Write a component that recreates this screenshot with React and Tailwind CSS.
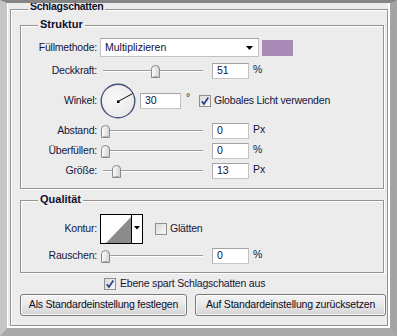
import React from "react";

const font = { fontFamily: '"Liberation Sans", Arial, sans-serif' };

const Thumb = ({ left }) => (
  <svg
    className="absolute top-[2px]"
    style={{ left }}
    width="9"
    height="13"
    viewBox="0 0 9 13"
  >
    <defs>
      <linearGradient id="tg" x1="0" y1="0" x2="1" y2="0">
        <stop offset="0" stopColor="#ffffff" />
        <stop offset="1" stopColor="#d2d2d2" />
      </linearGradient>
    </defs>
    <path
      d="M0.5 12.5 V4 Q0.5 0.5 4.5 0.5 Q8.5 0.5 8.5 4 V12.5 Z"
      fill="url(#tg)"
      stroke="#8a8a8a"
    />
    <path d="M2 11.5 H7" stroke="#b0b0b0" />
  </svg>
);

const Slider = ({ pos }) => (
  <div className="relative ml-[3px] h-[16px] w-[109px]">
    <div className="absolute left-[3px] top-[7px] h-px w-[100px] bg-[#9d9d9d]" />
    <div className="absolute left-[3px] top-[8px] h-px w-[100px] bg-white" />
    <Thumb left={pos} />
  </div>
);

const Field = ({ value, w = "w-[37px]", ml = "ml-[3px]" }) => (
  <div
    className={`${w} ${ml} flex h-[16px] items-center border border-[#c4c4c4] border-t-[#a2a2a2] border-l-[#b0b0b0] bg-white pl-[4px] text-[10.5px] text-[#10103a]`}
  >
    {value}
  </div>
);

const Label = ({ children }) => (
  <span className="w-[76px] shrink-0 text-right text-[10.5px] tracking-[-0.2px] text-[#16163a]">
    {children}
  </span>
);

const Unit = ({ children }) => (
  <span className="ml-[4px] self-start text-[10.5px] leading-[12px] text-[#16163a]">
    {children}
  </span>
);

const Check = ({ checked }) => (
  <svg width="12" height="12" viewBox="0 0 12 12" className="shrink-0">
    <defs>
      <linearGradient id="cg" x1="0" y1="0" x2="1" y2="1">
        <stop offset="0" stopColor="#d8d8d8" />
        <stop offset="1" stopColor="#fbfbfb" />
      </linearGradient>
    </defs>
    <rect x="0.5" y="0.5" width="11" height="11" fill="url(#cg)" stroke="#8e8f8f" />
    {checked && (
      <path
        d="M2.8 6.2 L4.9 9 L9.3 2.6"
        fill="none"
        stroke="#2c3f86"
        strokeWidth="1.7"
      />
    )}
  </svg>
);

const Group = ({ title, className, children }) => (
  <div
    className={`relative border border-[#929292] shadow-[1px_1px_0_#ffffff,inset_1px_1px_0_#ffffff] ${className}`}
  >
    <span className="absolute left-[17px] top-[-8px] bg-[#ececec] px-[2px] text-[11px] font-bold leading-[13px] text-[#0f0f2a]">
      {title}
    </span>
    {children}
  </div>
);

const SliderRow = ({ label, pos, value, unit, className = "" }) => (
  <div className={`flex h-[16px] items-center ${className}`}>
    <Label>{label}</Label>
    <Slider pos={pos} />
    <Field value={value} />
    <Unit>{unit}</Unit>
  </div>
);

const Dial = () => (
  <svg width="36" height="36" viewBox="0 0 36 36" className="ml-[3px] shrink-0">
    <defs>
      <radialGradient id="dg" cx="0.4" cy="0.4" r="0.7">
        <stop offset="0" stopColor="#fafafa" />
        <stop offset="1" stopColor="#e6e6e6" />
      </radialGradient>
    </defs>
    <circle cx="18" cy="18" r="16.8" fill="url(#dg)" stroke="#46527e" strokeWidth="1.4" />
    <line x1="18" y1="18.5" x2="32.6" y2="10.6" stroke="#111" strokeWidth="1" />
    <rect x="17" y="17.5" width="2.5" height="2.5" fill="#000" />
  </svg>
);

const Contour = () => (
  <div className="ml-[3px] flex h-[30px] w-[43px] border border-black bg-white">
    <svg width="30" height="28" viewBox="0 0 30 28" className="shrink-0">
      <polygon points="5,28 30,2 30,28" fill="#8b8b8b" />
    </svg>
    <div className="w-px bg-black" />
    <div className="flex flex-1 items-center justify-center">
      <svg width="6" height="4" viewBox="0 0 6 4" className="-mt-[2px]">
        <polygon points="0,0 6,0 3,3.5" fill="#000" />
      </svg>
    </div>
  </div>
);

const Button = ({ children, w }) => (
  <button
    className={`${w} h-[22px] rounded-[3px] border border-[#7a7a7a] bg-linear-to-b from-[#f4f4f4] via-[#e8e8e8] to-[#d3d3d3] text-[10.5px] tracking-[-0.2px] text-[#0b0b1e] shadow-[inset_0_0_0_1px_#fbfbfb]`}
  >
    {children}
  </button>
);

export default function App() {
  return (
    <div
      className="h-[336px] w-[397px] overflow-hidden border-b-[8px] border-l-[7px] border-r-[7px] border-t-[3px] border-b-[#a9a9a9] border-l-[#c6c6c6] border-r-[#a4a4a4] border-t-[#858585]"
      style={font}
    >
      <div className="h-full border-b-2 border-l border-r-2 border-white bg-[#ececec] pt-[6px] pl-[2px]">
        <div className="relative h-[317px] border border-[#929292] shadow-[inset_1px_1px_0_#ffffff]">
          <span className="absolute left-[17px] top-[-10px] bg-[#ececec] px-[2px] text-[10.5px] font-bold leading-[12px] tracking-[-0.3px] text-[#0f0f2a]">
            Schlagschatten
          </span>

          <Group title="Struktur" className="ml-[9px] mr-[3px] mt-[15px] pb-[9px] pt-[12px]">
            <div className="flex h-[19px] items-center">
              <Label>Füllmethode:</Label>
              <div className="ml-[3px] flex h-[19px] w-[159px] items-center justify-between border border-[#c2c2c2] border-t-[#a4a4a4] bg-white pl-[4px] pr-[5px] text-[10.5px] text-[#10103a]">
                <span>Multiplizieren</span>
                <svg width="7" height="4" viewBox="0 0 7 4">
                  <polygon points="0,0 7,0 3.5,4" fill="#000" />
                </svg>
              </div>
              <div className="ml-[3px] h-[16px] w-[31px] bg-[#a98ab6]" />
            </div>

            <SliderRow label="Deckkraft:" pos={51} value="51" unit="%" className="mt-[6px]" />

            <div className="mt-[4px] flex h-[36px] items-center">
              <Label>Winkel:</Label>
              <Dial />
              <Field value="30" w="w-[41px]" ml="ml-[4px]" />
              <span className="w-[18px] self-start pl-[5px] pt-[8px] text-[10.5px] leading-[12px] text-[#16163a]">
                °
              </span>
              <Check checked />
              <span className="ml-[3px] text-[10.5px] tracking-[-0.2px] text-[#16163a]">
                Globales Licht verwenden
              </span>
            </div>

            <SliderRow label="Abstand:" pos={1} value="0" unit="Px" className="mt-[4px]" />
            <SliderRow label="Überfüllen:" pos={1} value="0" unit="%" className="mt-[4px]" />
            <SliderRow label="Größe:" pos={12} value="13" unit="Px" className="mt-[4px]" />
          </Group>

          <Group title="Qualität" className="ml-[9px] mr-[3px] mt-[11px] pb-[8px] pt-[13px]">
            <div className="flex h-[30px] items-center">
              <Label>Kontur:</Label>
              <Contour />
              <div className="ml-[12px]">
                <Check />
              </div>
              <span className="ml-[3px] text-[10.5px] tracking-[-0.2px] text-[#16163a]">Glätten</span>
            </div>
            <SliderRow label="Rauschen:" pos={1} value="0" unit="%" className="mt-[4px]" />
          </Group>

          <div className="mt-[5px] flex h-[12px] items-center pl-[93px]">
            <Check checked />
            <span className="ml-[4px] text-[10.5px] tracking-[-0.2px] text-[#16163a]">
              Ebene spart Schlagschatten aus
            </span>
          </div>

          <div className="ml-[9px] mt-[4px] flex gap-[8px]">
            <Button w="w-[167px]">Als Standardeinstellung festlegen</Button>
            <Button w="w-[191px]">Auf Standardeinstellung zurücksetzen</Button>
          </div>
        </div>
      </div>
    </div>
  );
}
